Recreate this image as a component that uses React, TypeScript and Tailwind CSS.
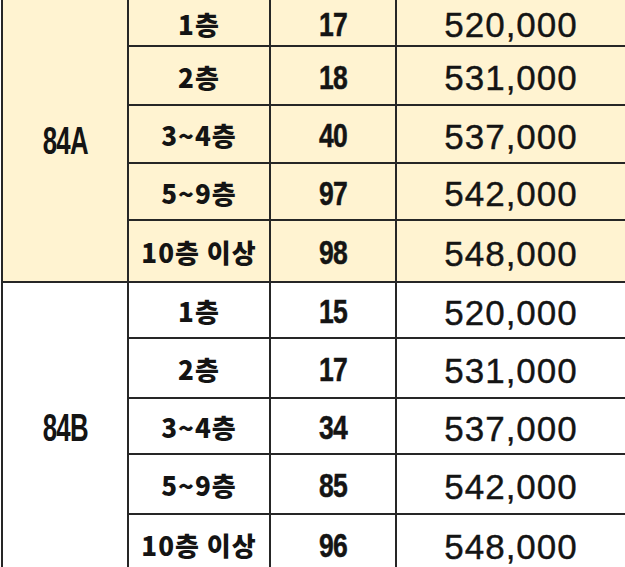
import React from 'react';

type Row = { floor: string; count: string; price: string; h: string };

const groups: { type: string; bg: string; rows: Row[] }[] = [
  {
    type: '84A',
    bg: 'bg-[#fff3d1]',
    rows: [
      { floor: '1층', count: '17', price: '520,000', h: 'h-[47px]' },
      { floor: '2층', count: '18', price: '531,000', h: 'h-[59px]' },
      { floor: '3~4층', count: '40', price: '537,000', h: 'h-[58px]' },
      { floor: '5~9층', count: '97', price: '542,000', h: 'h-[57px]' },
      { floor: '10층 이상', count: '98', price: '548,000', h: 'h-[60px]' },
    ],
  },
  {
    type: '84B',
    bg: 'bg-white',
    rows: [
      { floor: '1층', count: '15', price: '520,000', h: 'h-[56px]' },
      { floor: '2층', count: '17', price: '531,000', h: 'h-[60px]' },
      { floor: '3~4층', count: '34', price: '537,000', h: 'h-[56px]' },
      { floor: '5~9층', count: '85', price: '542,000', h: 'h-[60px]' },
      { floor: '10층 이상', count: '96', price: '548,000', h: 'h-[58px]' },
    ],
  },
];

const App: React.FC = () => {
  return (
    <div className="w-[625px] h-[567px] overflow-hidden bg-white text-[#141414]">
      <div className="ml-px border-l-2 border-[#262626]">
        {groups.map((group) => (
          <div key={group.type} className={`flex border-b-2 border-[#262626] ${group.bg}`}>
            {/* Type column */}
            <div className="w-[126px] shrink-0 border-r-2 border-[#262626] flex items-center justify-center">
              <span className="inline-block scale-x-[0.68] text-[38px] font-bold leading-none font-['Liberation_Sans',sans-serif] tracking-[-1px]">
                {group.type}
              </span>
            </div>

            {/* Floor rows */}
            <div className="flex-1">
              {group.rows.map((row, i) => (
                <div
                  key={row.floor}
                  className={`grid grid-cols-[142px_126px_1fr] ${row.h} ${
                    i < group.rows.length - 1 ? 'border-b-2 border-[#262626]' : ''
                  }`}
                >
                  <div className="border-r-2 border-[#262626] flex items-center justify-center pt-[2px]">
                    <span className="text-[26px] font-black leading-none tracking-[1px] font-['Noto_Sans_CJK_KR',sans-serif]">
                      {row.floor}
                    </span>
                  </div>
                  <div className="border-r-2 border-[#262626] flex items-center justify-center pt-[2px]">
                    <span className="inline-block scale-x-[0.78] text-[34px] font-bold leading-none tracking-[-1px] font-['Liberation_Sans',sans-serif] [-webkit-text-stroke:0.5px_#141414]">
                      {row.count}
                    </span>
                  </div>
                  <div className="flex items-center justify-center pt-[4px]">
                    <span className="text-[35px] leading-none tracking-[1px] font-['Liberation_Sans',sans-serif] [-webkit-text-stroke:0.4px_#141414]">
                      {row.price}
                    </span>
                  </div>
                </div>
              ))}
            </div>
          </div>
        ))}
      </div>
    </div>
  );
};

export default App;
